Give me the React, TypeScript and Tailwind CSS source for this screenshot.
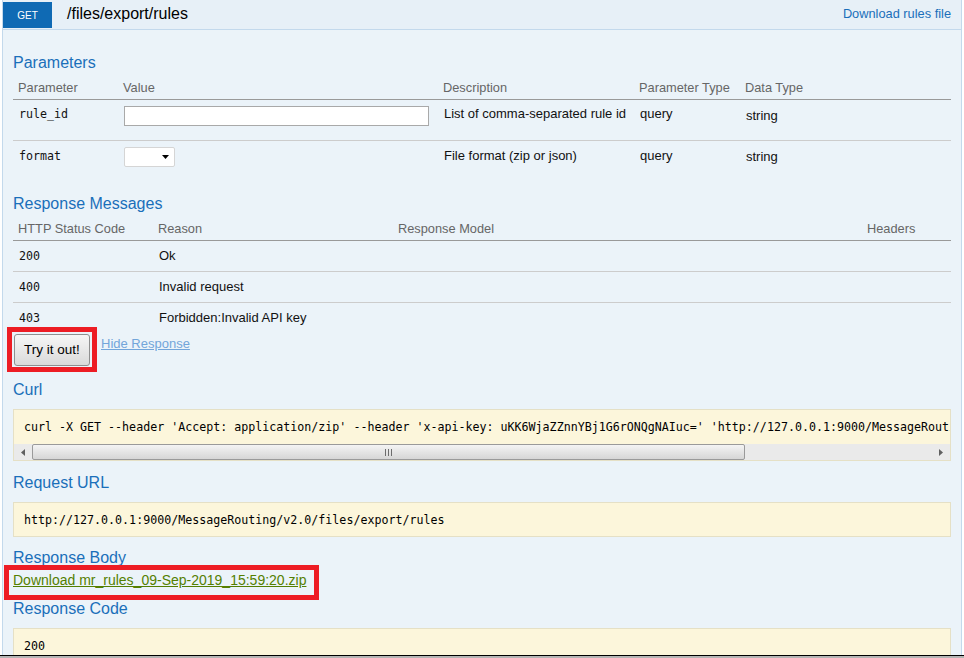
import React from 'react'

const headingCls = 'text-[16px] leading-[20px] text-[#1a6fba]'
const monoCls = "font-['DejaVu_Sans_Mono',monospace] text-[11.65px] leading-[14px]"

function Heading({ children, className = '' }: { children: React.ReactNode; className?: string }) {
  return <h4 className={`${headingCls} ${className}`}>{children}</h4>
}

function CodeBox({ children, className = '' }: { children: React.ReactNode; className?: string }) {
  return (
    <div className={`border border-[#e5e0c6] bg-[#fcf6db] ${className}`}>
      <div className={`${monoCls} overflow-hidden whitespace-nowrap pl-[10px] pt-[10px] pb-[9px]`}>{children}</div>
    </div>
  )
}

function Header() {
  return (
    <div className="flex h-[30px] items-start border-b border-[#c3d9ec] bg-[#e7f0f7] pt-[2px]">
      <div className="flex h-[26px] w-[49px] items-center justify-center bg-[#0f6ab4] text-[10px] text-white">GET</div>
      <div className="ml-[15px] mt-[2px] text-[16px] leading-[20px] text-black">/files/export/rules</div>
      <a className="ml-auto mr-[10px] mt-[4px] text-[12.8px] leading-[16px] text-[#1a6fba]">Download rules file</a>
    </div>
  )
}

function ParamsTable() {
  const cols = 'grid grid-cols-[105px_320px_196px_106px_1fr]'
  return (
    <div className="mt-[3px]">
      <div className={`${cols} h-[24px] items-center border-b border-[#999] text-[12.8px] leading-[14px] text-[#666]`}>
        <div className="pl-[5px]">Parameter</div>
        <div className="pl-[5px]">Value</div>
        <div className="pl-[5px]">Description</div>
        <div className="pl-[5px]">Parameter Type</div>
        <div className="pl-[5px]">Data Type</div>
      </div>
      <div className={`${cols} h-[41px] items-start border-b border-[#ccc] text-[13px] leading-[14px] text-[#111]`}>
        <div className={`${monoCls} pl-[6px] pt-[7px]`}>rule_id</div>
        <div className="pl-[6px] pt-[6px]">
          <div className="h-[20px] w-[305px] border border-[#a9a9a9] bg-white" />
        </div>
        <div className="pl-[6px] pt-[7px]">List of comma-separated rule id</div>
        <div className="pl-[6px] pt-[7px]">query</div>
        <div className="pl-[6px] pt-[9px]">string</div>
      </div>
      <div className={`${cols} h-[41px] items-start text-[13px] leading-[14px] text-[#111]`}>
        <div className={`${monoCls} pl-[6px] pt-[8px]`}>format</div>
        <div className="pl-[6px] pt-[6px]">
          <div className="flex h-[20px] w-[51px] items-center justify-end rounded-[2px] border border-[#d5d5d5] bg-white pr-[5px]">
            <svg width="7" height="4" viewBox="0 0 7 4">
              <path d="M0 0h7L3.5 4z" fill="#000" />
            </svg>
          </div>
        </div>
        <div className="pl-[6px] pt-[8px]">File format (zip or json)</div>
        <div className="pl-[6px] pt-[8px]">query</div>
        <div className="pl-[6px] pt-[9px]">string</div>
      </div>
    </div>
  )
}

function ResponseTable() {
  const cols = 'grid grid-cols-[140px_240px_469px_1fr]'
  const rows = [
    ['200', 'Ok'],
    ['400', 'Invalid request'],
    ['403', 'Forbidden:Invalid API key'],
  ]
  return (
    <div className="mt-[3px]">
      <div className={`${cols} h-[24px] items-center border-b border-[#999] text-[12.8px] leading-[14px] text-[#666]`}>
        <div className="pl-[5px]">HTTP Status Code</div>
        <div className="pl-[5px]">Reason</div>
        <div className="pl-[5px]">Response Model</div>
        <div className="pl-[5px]">Headers</div>
      </div>
      {rows.map(([code, reason], i) => (
        <div
          key={code}
          className={`${cols} items-start text-[13px] leading-[14px] text-[#111] ${i < rows.length - 1 ? 'h-[31px] border-b border-[#ccc]' : 'h-[31px]'}`}
        >
          <div className={`${monoCls} pl-[6px] pt-[8px]`}>{code}</div>
          <div className="pl-[6px] pt-[8px]">{reason}</div>
          <div />
          <div />
        </div>
      ))}
    </div>
  )
}

function Scrollbar() {
  return (
    <div className="flex h-[16px] bg-[#eaeaea]">
      <div className="flex w-[18px] items-center justify-center">
        <svg width="4" height="7" viewBox="0 0 4 7">
          <path d="M4 0v7L0 3.5z" fill="#606060" />
        </svg>
      </div>
      <div className="flex w-[713px] items-center justify-center rounded-[2px] border border-[#9a9a9a] bg-gradient-to-b from-[#f4f4f4] to-[#d6d6d6]">
        <div className="flex gap-[2px]">
          <div className="h-[7px] w-px bg-[#6d6d6d]" />
          <div className="h-[7px] w-px bg-[#6d6d6d]" />
          <div className="h-[7px] w-px bg-[#6d6d6d]" />
        </div>
      </div>
      <div className="flex-1" />
      <div className="flex w-[18px] items-center justify-center">
        <svg width="4" height="7" viewBox="0 0 4 7">
          <path d="M0 0v7L4 3.5z" fill="#606060" />
        </svg>
      </div>
    </div>
  )
}

export default function App() {
  return (
    <div className="h-[658px] overflow-hidden bg-white font-['Liberation_Sans',Arial,sans-serif] text-[12px] text-black">
      <div className="h-[655px] overflow-hidden px-[2px]">
        <div className="h-full border-x border-[#c3d9ec] bg-[#ebf3f9]">
          <Header />
          <div className="px-[10px]">
            <Heading className="mt-[23px]">Parameters</Heading>
            <ParamsTable />
            <Heading className="mt-[12px]">Response Messages</Heading>
            <ResponseTable />

            <div className="flex items-start">
              <div className="relative ml-[1px]">
                <button className="h-[32px] w-[76px] rounded-[3px] border border-[#8f8f8f] bg-gradient-to-b from-[#f6f6f6] to-[#dadada] text-[13.5px] text-black">
                  Try it out!
                </button>
                <span className="absolute -bottom-[6px] -left-[7px] -right-[7px] -top-[7px] border-[5px] border-[#ed1c24]" />
              </div>
              <a className="ml-[11px] mt-[2px] text-[13px] leading-[16px] text-[#72a5da] underline">Hide Response</a>
            </div>

            <Heading className="mt-[14px]">Curl</Heading>
            <div className="mt-[9px] border border-[#e5e0c6] bg-[#fcf6db]">
              <div className={`${monoCls} overflow-hidden whitespace-nowrap pl-[10px] pt-[10px] pb-[10px]`}>
                curl -X GET --header 'Accept: application/zip' --header 'x-api-key: uKK6WjaZZnnYBj1G6rONQgNAIuc='
                'http://127.0.0.1:9000/MessageRouting/v2.0/files/export/rules'
              </div>
              <Scrollbar />
            </div>

            <Heading className="mt-[12px]">Request URL</Heading>
            <CodeBox className="mt-[9px]">http://127.0.0.1:9000/MessageRouting/v2.0/files/export/rules</CodeBox>

            <Heading className="mt-[11px]">Response Body</Heading>
            <div className="mt-[4px]">
              <span className="relative inline-block">
                <a className="text-[14px] leading-[16px] text-[#547f00] underline">
                  Download mr_rules_09-Sep-2019_15:59:20.zip
                </a>
                <span className="absolute -bottom-[10px] -left-[9px] -right-[13px] -top-[7px] border-[5px] border-[#ed1c24]" />
              </span>
            </div>

            <Heading className="mt-[9px]">Response Code</Heading>
            <CodeBox className="mt-[9px]">
              200
              <div className="h-[20px]" />
            </CodeBox>
          </div>
        </div>
      </div>
      <div className="h-px bg-black" />
      <div className="h-[2px] bg-[#b5b5b5]" />
    </div>
  )
}
